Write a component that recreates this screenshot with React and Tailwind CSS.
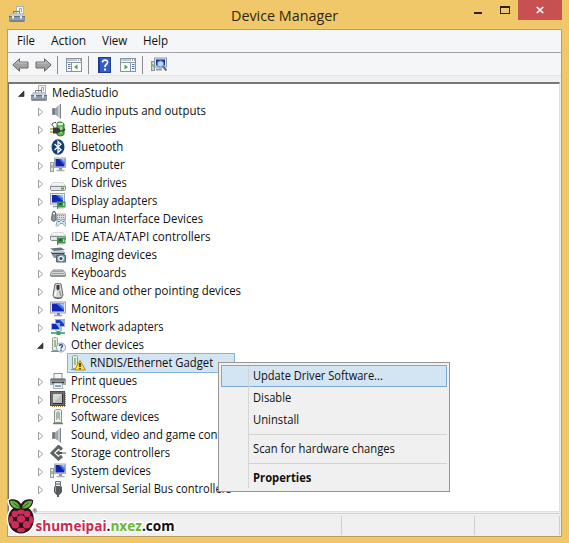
import React, { useLayoutEffect, useRef, useState } from "react";

/* Text condensed or widened to a fixed width. */
function Fit({ w, className = "", children }) {
  const ref = useRef(null);
  const [scale, setScale] = useState(1);
  useLayoutEffect(() => {
    setScale(w / ref.current.offsetWidth);
  }, []);
  return (
    <span className={"block shrink-0 whitespace-pre " + className} style={{ width: w + "px" }}>
      <span ref={ref} className="inline-block origin-left" style={{ transform: `scaleX(${scale})` }}>
        {children}
      </span>
    </span>
  );
}

function Svg({ children, className = "w-4 h-4" }) {
  return (
    <svg viewBox="0 0 16 16" className={"shrink-0 " + className} fill="none">
      {children}
    </svg>
  );
}

const Toolbox = () => (
  <Svg>
    <rect x="7.500" y="0.500" width="7" height="9" fill="#f3f4f0" stroke="#b0b4ae" />
    <path d="M10.500 6V2.500h2V6" stroke="#8cb97a" />
    <path d="M4.500 8V5.500h6V8" stroke="#6d757d" />
    <path d="M2 7.500h12l2 3V15H0v-4.500z" fill="#8794a1" />
    <path d="M2 7.500h12l1.500 2.500H.5z" fill="#c3ccd5" />
    <path d="M0 10.500h16" stroke="#65717d" />
    <path d="M.5 15.200h15" stroke="#5b646e" />
    <path d="M1 13h14" stroke="#9daab6" />
    <rect x="3" y="10" width="2" height="2.500" fill="#e6ebef" />
    <rect x="11" y="10" width="2" height="2.500" fill="#e6ebef" />
  </Svg>
);
const Speaker = () => (
  <Svg>
    <path d="M2.500 5.500H5v6H2.500z" fill="#6d7378" stroke="#8a9095" />
    <path d="M5 5.500 10.500 1v14.500L5 11.500z" fill="#9da5ab" />
    <path d="M8 3.500 10.500 1v14.500L8 13.500z" fill="#c2c8cd" />
    <path d="M10.500 1v14.500" stroke="#7b858e" />
  </Svg>
);
const Battery = () => (
  <Svg>
    <path d="M7 2.500c0-2 6-2 6 0l1 .5v10c0 2.500-7 2.500-7 0z" fill="#5cb855" stroke="#25702b" />
    <ellipse cx="10.300" cy="3" rx="3" ry="1.200" fill="#d8f0cf" />
    <path d="M11 6v6" stroke="#b8e8a8" strokeWidth="1.500" />
    <path d="M4 6C.5 4 2 1.500 6 1.500" stroke="#393d39" />
    <path d="M3 6.500h4.500L10 8v3l-2.500 1.500H3z" fill="#333932" />
    <path d="M0 8h3M0 11h3" stroke="#b09a48" strokeWidth="1.500" />
    <path d="M10 10c2 0 3 1 5-2" stroke="#33402e" strokeWidth="1.500" />
  </Svg>
);
const Bluetooth = () => (
  <Svg>
    <ellipse cx="8" cy="8" rx="6.500" ry="7.800" fill="#123f77" />
    <path d="M4.500 5 11 10.700 8 13.500v-11l3 2.800L4.500 11" stroke="#fff" strokeWidth="1.300" />
  </Svg>
);
const Computer = () => (
  <Svg>
    <rect x="4.500" y="1" width="11" height="9.500" fill="#e6e9ed" stroke="#a4acb6" />
    <rect x="5.500" y="2" width="9" height="7.500" fill="#1220b4" />
    <path d="M9 2h5.500v6z" fill="#4a76e8" />
    <path d="M11.500 2h3v3z" fill="#a7cafa" />
    <path d="M9 11h3v2H9z" fill="#8c949c" />
    <path d="M6.500 13.500h8" stroke="#a9b0b8" strokeWidth="1.500" />
    <rect x="0.500" y="5.500" width="3" height="9" fill="#dfe2e2" stroke="#9aa0a1" />
    <path d="M2 8v3" stroke="#4dae45" />
  </Svg>
);
const Monitor = () => (
  <Svg>
    <rect x="0.500" y="1" width="15" height="11" fill="#e6e9ed" stroke="#9aa4b0" />
    <rect x="2" y="2.500" width="12" height="8" fill="#1424b7" />
    <path d="M6 2.500h8v7z" fill="#4a7de8" />
    <path d="M9 2.500h5v4z" fill="#9dc4f8" />
    <path d="M7 12h3v2H7z" fill="#777f88" />
    <path d="M4 14.500h8" stroke="#9aa1a9" strokeWidth="1.500" />
  </Svg>
);
const Drive = () => (
  <>
    <path d="M3 6h10l3 3v3.500l-1 1H1l-1-1V9z" fill="#c4c7c8" />
    <path d="M3 5.500h10l2.500 3.500H.5z" fill="#f3f4f4" stroke="#c0c3c5" strokeWidth=".6" />
    <path d="M.5 9.500h15v3l-1 1h-13l-1-1z" fill="#e4e6e6" stroke="#8a8f92" />
  </>
);
const Disk = () => (
  <Svg className="w-4 h-4 translate-y-0.5">
    <Drive />
    <rect x="11" y="10.500" width="3" height="2" fill="#47a83d" />
  </Svg>
);
const Chip = () => (
  <>
    <rect x="8" y="8.500" width="7.500" height="6" fill="#3a9152" />
    <path d="M8.500 15.200h6" stroke="#b9a55a" strokeDasharray="1 1" />
    <rect x="9.500" y="10" width="2" height="2" fill="#164f29" />
    <rect x="13" y="10" width="1.500" height="3" fill="#a5dba8" />
    <path d="M7.500 8v8" stroke="#69756c" />
  </>
);
const Display = () => (
  <Svg>
    <rect x="0.500" y="0.500" width="14" height="10.500" fill="#e6e9ed" stroke="#9aa4b0" />
    <rect x="2" y="2" width="11" height="7.500" fill="#1424b7" />
    <path d="M6 2h7v6z" fill="#4a7de8" />
    <path d="M9 2h4v3z" fill="#9dc4f8" />
    <path d="M3 13.500h6" stroke="#9aa1a9" strokeWidth="1.500" />
    <Chip />
  </Svg>
);
const Hid = () => (
  <Svg>
    <path d="M6 3h9.500v6H6z" fill="#d9dde0" stroke="#929a9f" strokeWidth=".8" />
    <path d="M7 4.500h8M7 6.500h8" stroke="#838d96" strokeDasharray="1 1" />
    <path d="M2.500 1.500c0-1.500 3-1.500 3 0L6 8c0 3-4.500 3-4.500 0z" fill="#8c979d" stroke="#5b6468" />
    <path d="M3 2.500h2" stroke="#fff" strokeWidth="1.500" />
    <path d="M6 14.500 7.500 8.500h2l1 1h1l1-1h2L16 14.500c-1 1.500-2 0-3-2h-3c-1 2-3 3.500-4 2z" fill="#d9e8f3" stroke="#7192ab" strokeWidth=".8" />
    <path d="M8 10.500h2M12.500 10.500h1.500" stroke="#547fa7" />
  </Svg>
);
const Ide = () => (
  <Svg>
    <g transform="translate(0 -2)"><Drive /></g>
    <Chip />
  </Svg>
);
const Imaging = () => (
  <Svg>
    <path d="M0 1.500 11 .5 15 3 4 4z" fill="#66747f" />
    <path d="M1 5h13l1 2.500H2z" fill="#2e3c48" />
    <path d="M1 4.500 14 4l1.500 2H2z" fill="#b5c1c9" />
    <path d="M2 8h8v3H4z" fill="#8a979f" />
    <path d="M6.500 8.500H9l1-1.500h3l1 1.500h1.500v6.500h-9z" fill="#8797a4" stroke="#52636f" />
    <circle cx="11" cy="11.500" r="2.800" fill="#eef5fa" />
    <circle cx="11" cy="11.500" r="1.500" fill="#1e4d7d" />
  </Svg>
);
const Keyboard = () => (
  <Svg>
    <path d="M3 5h10l2.500 3.500V11h-15V8.500z" fill="#d3d6d7" stroke="#868b8e" />
    <path d="M3.500 6.500h9M2.500 8.500h11" stroke="#656b70" strokeDasharray="1 1" />
    <path d="M1 11h14" stroke="#6c7174" />
  </Svg>
);
const Mouse = () => (
  <Svg>
    <path d="M5 1C6 0 10 0 11 1l2 11c0 4-10 4-10 0z" fill="#d7d8d7" stroke="#656866" />
    <path d="M6.500 2h3v4l-1.500 1.500L6.500 6z" fill="#353938" />
    <path d="M6 8 5 13" stroke="#fff" strokeWidth="1.500" />
    <path d="M9.500 8 11 13" stroke="#969a99" strokeWidth="1.500" />
    <path d="M3.500 14c2 2 7 2 9 0" stroke="#4d514f" />
  </Svg>
);
const Network = () => (
  <Svg>
    <rect x="5.500" y="0.500" width="9" height="7" fill="#1f39c5" stroke="#a5afbb" />
    <path d="M10 1h4v4z" fill="#82b0f5" />
    <rect x="1.500" y="4.500" width="8" height="6" fill="#1529b8" stroke="#b0b9c3" />
    <path d="M6 5h3v4z" fill="#82b0f5" />
    <path d="M11 8v4M5 11h2" stroke="#98a0a8" strokeWidth="1.500" />
    <path d="M1 14h14" stroke="#55b886" strokeWidth="2" />
    <path d="M6.500 12h4v4h-4z" fill="#3d9f6d" />
  </Svg>
);
const Case = () => (
  <>
    <path d="M2.500 13.500v-12c0-1.300 5-1.300 5 0v12z" fill="#e9ebe6" stroke="#979c95" />
    <path d="M5 3v7" stroke="#70b864" strokeWidth="1.500" />
    <path d="M1 14.500h8" stroke="#868d85" />
  </>
);
const Other = () => (
  <Svg>
    <Case />
    <circle cx="11" cy="10.500" r="4.500" fill="#f2f6fb" stroke="#8497ba" />
    <path d="M9.500 9c0-2 3.300-1.700 3 0-.2 1-1.500 1-1.500 2.500" stroke="#234da4" strokeWidth="1.400" />
    <rect x="10.300" y="12.500" width="1.500" height="1.400" fill="#234da4" />
  </Svg>
);
const Warning = () => (
  <Svg>
    <Case />
    <path d="m10 5.500 5.500 9.500h-11z" fill="#ffdc35" stroke="#b48a12" strokeLinejoin="round" />
    <path d="M10 8v4M10 13v1.300" stroke="#272410" strokeWidth="1.500" />
  </Svg>
);
const Printer = () => (
  <Svg>
    <rect x="4" y="0.500" width="8" height="6" fill="#f3f6f8" stroke="#8a9298" />
    <path d="M1 5.500h14l1 2V12H0V7.500z" fill="#a3a9ad" />
    <path d="M1 5.500h14l1 2H0z" fill="#6d757b" />
    <path d="M2 9.500h12" stroke="#353b40" strokeWidth="1.500" />
    <path d="M4 10h8l1 5.500H3z" fill="#eef4f8" stroke="#899299" strokeWidth=".7" />
    <path d="M5 13h6" stroke="#4c93c4" strokeWidth="1.500" />
  </Svg>
);
const Processor = () => (
  <Svg>
    <path d="M2 15.500h14M15.500 2v13" stroke="#a88446" strokeDasharray="1 1" />
    <rect x="0.500" y="0.500" width="14" height="14" fill="#6a6d6f" stroke="#4b4d4e" />
    <rect x="3" y="3" width="9" height="9" fill="#bcbebe" />
    <path d="M3 3h9l-9 9z" fill="#d6d8d8" />
    <path d="M3 12.500h9.500V3" stroke="#2c2e2f" />
  </Svg>
);
const Software = () => (
  <Svg>
    <path d="M4.500 13.500v-12c0-1.300 7-1.300 7 0v12z" fill="#eef0ed" stroke="#8c918b" />
    <path d="M6.500 11V3.500c0-1 3-1 3 0V11" stroke="#a8aea6" />
    <path d="M8 3.500v6" stroke="#67b557" strokeWidth="1.300" />
    <path d="M3 14.500h10" stroke="#757c75" strokeWidth="1.500" />
  </Svg>
);
const Storage = () => (
  <Svg>
    <path d="m12 4.500-3.500-3L2 8l6.500 6 3.500-3" stroke="#5f6363" strokeWidth="3" />
    <path d="M8 8h5" stroke="#4a4d4d" strokeWidth="2" />
    <path d="m9.500 5-4 3 4 3z" fill="#5b5f5f" />
    <path d="M12 7h4v2h-4z" fill="#a9adad" />
  </Svg>
);
const Usb = () => (
  <Svg>
    <path d="M5.500.5h5v5h-5z" fill="#e3e5e6" stroke="#6e7376" />
    <path d="M7 2v2M9 2v2" stroke="#5a5f61" />
    <path d="M4 5.500h8V11l-2.500 3h-3L4 11z" fill="#555b5f" />
    <path d="M5.500 6v5" stroke="#9ba1a4" />
    <path d="M8 13v3" stroke="#5c6265" strokeWidth="2" />
  </Svg>
);

const rows = [
  ["Audio inputs and outputs", 135, Speaker],
  ["Batteries", 45, Battery],
  ["Bluetooth", 52, Bluetooth],
  ["Computer", 54, Computer],
  ["Disk drives", 56, Disk],
  ["Display adapters", 86, Display],
  ["Human Interface Devices", 132, Hid],
  ["IDE ATA/ATAPI controllers", 140, Ide],
  ["Imaging devices", 86, Imaging],
  ["Keyboards", 55, Keyboard],
  ["Mice and other pointing devices", 170, Mouse],
  ["Monitors", 48, Monitor],
  ["Network adapters", 93, Network],
  ["Other devices", 73, Other, "open"],
  ["RNDIS/Ethernet Gadget", 123, Warning, "selected"],
  ["Print queues", 66, Printer],
  ["Processors", 56, Processor],
  ["Software devices", 88, Software],
  ["Sound, video and game controllers", 184, Speaker],
  ["Storage controllers", 99, Storage],
  ["System devices", 80, Computer],
  ["Universal Serial Bus controllers", 160, Usb],
];

const Expander = ({ open }) => (
  <svg viewBox="0 0 8 10" className="w-2 h-2.5 shrink-0 translate-y-px">
    {open ? (
      <path d="M6 2v5.500H.5z" fill="#3b3b3b" stroke="#222" strokeWidth=".6" />
    ) : (
      <path d="M1.500 1.200v7.600L5.700 5z" fill="#fff" stroke="#9d9d9d" />
    )}
  </svg>
);

function Row({ item }) {
  const [label, w, Icon, state] = item;
  if (state === "selected")
    return (
      <div className="flex h-[18px] pl-[58px]">
        <div className="flex h-5 w-[168px] -mt-px items-center border border-[#86b3da] bg-[#d3e4f3] pl-0.5">
          <Icon />
          <Fit w={w} className="ml-1">{label}</Fit>
        </div>
      </div>
    );
  return (
    <div className="flex h-[18px] items-center pl-[28px]">
      <Expander open={state === "open"} />
      <span className="ml-[5px] flex"><Icon /></span>
      <Fit w={w} className="ml-[5px]">{label}</Fit>
    </div>
  );
}

const Arrow = ({ flip }) => (
  <svg viewBox="0 0 17 14" className={"w-[17px] h-3.5 " + (flip ? "-scale-x-100" : "")}>
    <path d="M.8 7 7.500.8V4H16v6H7.500v3.200z" fill="#a3a3a3" stroke="#686868" strokeLinejoin="round" />
    <path d="M3 6.500 6.500 3v2H15" fill="none" stroke="#c9c9c9" />
  </svg>
);

const PanelIcon = ({ right }) => (
  <svg viewBox="0 0 16 14" className="w-4 h-3.5" fill="none">
    <rect x=".5" y=".5" width="15" height="13" fill="#fafbfc" stroke="#8b939c" />
    <path d="M1 2h10M1 4.500h14" stroke="#8b98a8" />
    <path d="M12 2h1M14 2h1" stroke="#4f5c6c" />
    <path d={right ? "M10.500 5v8" : "M5.500 5v8"} stroke="#8b98a8" />
    <path d={right ? "M12 6.500h2.500M12 8.500h2.500M12 10.500h2.500" : "M2 6.500h2.500M2 8.500h2.500M2 10.500h2.500"} stroke="#5574a5" />
    <path d={right ? "M4.500 6.500v5L8 9z" : "M11.500 6.500v5L8 9z"} fill="#46a935" />
  </svg>
);

const Separator = () => <div className="h-[18px] w-px bg-[#8d8d8d]" />;

function MenuItem({ label, w, active, bold }) {
  return (
    <div
      className={
        "flex h-[22px] items-center border pl-[31px] " +
        (active ? "border-[#7eaad2] bg-[#d3e4f3]" : "border-transparent") +
        (bold ? " font-bold" : "")
      }
    >
      <Fit w={w}>{label}</Fit>
    </div>
  );
}

const berries = [
  [14, 14, 3.800, 2.600], [7.800, 16, 3.200, 3.200], [20.200, 16, 3.200, 3.200], [14, 21, 4.100, 3.700],
  [4, 21.800, 2, 3.900], [24, 21.800, 2, 3.900], [8.200, 26.800, 3.900, 3.800],
  [19.800, 26.800, 3.900, 3.800], [14, 32, 4, 2.300],
];

function Watermark() {
  return (
    <svg viewBox="0 0 176 38" className="absolute left-[7px] top-[498px] h-[38px] w-44 overflow-visible">
      <path
        d="M14 6C11 .5 4 .5 1.800 2.300c0 4 2 6.500 4.500 8C2.500 13 1.200 17 1.200 21c0 8 5 14.500 12.800 14.500S26.800 29 26.800 21c0-4-1.300-8-5.100-10.700 2.500-1.500 4.500-4 4.500-8C24 .5 17 .5 14 6z"
        fill="#2a1418" stroke="#fff" strokeWidth="3" paintOrder="stroke" strokeLinejoin="round"
      />
      <path d="M13.200 10.500C12 4 7 2 2.800 3c.7 5.500 5 8 10.400 7.500zM14.800 10.500C16 4 21 2 25.200 3c-.7 5.500-5 8-10.400 7.500z" fill="#62b23b" />
      <path d="M13 10 6.500 5M15 10l6.500-5" stroke="#1f4913" strokeWidth=".8" />
      {berries.map(([x, y, rx, ry], i) => (
        <ellipse key={i} cx={x} cy={y} rx={rx} ry={ry} fill="#cf2d57" />
      ))}
      <g stroke="#fff" strokeWidth="3" strokeLinejoin="round" paintOrder="stroke" className="font-['Open_Sans',sans-serif] font-bold">
        <text x="25.500" y="14.500" fontSize="5.500" fill="#333" strokeWidth="1">®</text>
        <text x="28.500" y="32.500" fontSize="14.800" textLength="139" lengthAdjust="spacingAndGlyphs">
          <tspan fill="#cd2850">shumeipai</tspan>
          <tspan fill="#111">.</tspan>
          <tspan fill="#68b82f">nxez</tspan>
          <tspan fill="#111">.com</tspan>
        </text>
      </g>
    </svg>
  );
}

export default function App() {
  return (
    <div className="relative flex h-[543px] w-[569px] flex-col overflow-hidden bg-[#f0c869] px-[7px] pb-1.5 font-['Open_Sans','Noto_Sans',sans-serif] text-[12px] leading-[18px] text-[#101010]">
      <header className="flex h-[29px] shrink-0 items-start">
        <div className="mt-1.5 ml-0.5 w-[222px] shrink-0"><Toolbox /></div>
        <Fit w={107} className="mt-[5px] text-[15px] leading-5 text-[#2d2813]">Device Manager</Fit>
        <div className="mt-3 ml-[136px] h-0.5 w-2 bg-[#28220f]" />
        <div className="mt-1.5 ml-[18px] h-2 w-2.5 border border-t-2 border-[#28220f]" />
        <div className="ml-2 flex h-5 w-[45px] items-center justify-center bg-[#c75050]">
          <svg viewBox="0 0 8 8" className="h-2 w-2"><path d="m.8 1 6.400 6M7.200 1 .8 7" stroke="#fff" strokeWidth="1.700" /></svg>
        </div>
      </header>

      <main className="flex min-h-0 flex-1 flex-col border border-[#bd9f5c] bg-[#f0f0f0]">
        <nav className="flex h-[23px] shrink-0 items-center border-b border-[#a7a7ad] bg-[#f5f6f7] pl-[9px]">
          <Fit w={18}>File</Fit>
          <Fit w={35} className="ml-4">Action</Fit>
          <Fit w={25} className="ml-4">View</Fit>
          <Fit w={25} className="ml-4">Help</Fit>
        </nav>
        <div className="flex h-[23px] shrink-0 items-center border-b border-[#e4e4e4] bg-[#f5f6f7] pl-1 pt-0.5">
          <Arrow />
          <span className="ml-1.5 mr-[5px]"><Arrow flip /></span>
          <Separator />
          <span className="ml-2 mr-1.5"><PanelIcon /></span>
          <Separator />
          <svg viewBox="0 0 13 16" className="ml-[9px] h-4 w-[13px]">
            <rect x=".5" y=".5" width="12" height="15" fill="#355dc8" stroke="#213d92" />
            <path d="M1.500 1v14" stroke="#203c97" />
            <path d="M4.500 5.500c0-3.500 5.500-3 5 0-.3 2-2.500 2-2.500 4.500" fill="none" stroke="#fff" strokeWidth="1.700" />
            <rect x="6" y="11.500" width="2" height="2" fill="#fff" />
          </svg>
          <span className="ml-[9px] mr-1.5"><PanelIcon right /></span>
          <Separator />
          <Svg className="ml-2 h-4 w-4">
            <rect x="3.500" y="1" width="12" height="9" fill="#dfe4ec" stroke="#8e9aab" />
            <rect x="5" y="2.500" width="9" height="6" fill="#1a2dad" />
            <rect x=".5" y="4.500" width="3" height="9" fill="#ced3d2" stroke="#8b9491" />
            <path d="M2 7v3" stroke="#4dac4a" />
            <path d="M5 12.500h6" stroke="#8e99a5" strokeWidth="2" />
            <circle cx="9.500" cy="7" r="3.200" fill="#b8ddf3" stroke="#5683b4" />
            <path d="m12 9.500 3.500 4" stroke="#65717f" strokeWidth="2" />
          </Svg>
        </div>
        <div className="mt-1.5 flex h-[430px] shrink-0 flex-col border-t-2 border-r border-b border-l border-t-[#777] border-r-[#dfdfdf] border-b-[#dfdfdf] border-l-[#777] bg-white mr-px">
          <div className="flex h-[18px] shrink-0 items-center pl-[9px]">
            <Expander open />
            <span className="ml-[5px] flex"><Toolbox /></span>
            <Fit w={66} className="ml-[5px]">MediaStudio</Fit>
          </div>
          {rows.map((r) => <Row key={r[0]} item={r} />)}
        </div>
        <footer className="mt-px flex flex-1 border-t border-[#d3d3d3] pt-0.5 pb-px">
          <div className="w-[334px] border-r border-[#cfcfcf]" />
          <div className="w-[133px] border-r border-[#cfcfcf]" />
          <div className="w-[85px] border-r border-[#cfcfcf]" />
        </footer>
      </main>

      <div className="absolute left-[218px] top-[362px] h-[130px] w-[232px] border border-[#979797] bg-[#f0f0f0] p-0.5">
        <div className="absolute top-[3px] left-[29px] h-[122px] w-px bg-[#d5d5d5]" />
        <MenuItem active label="Update Driver Software..." w={130} />
        <MenuItem label="Disable" w={38} />
        <MenuItem label="Uninstall" w={46} />
        <div className="mt-[3px] mb-[3px] ml-7 h-px bg-[#d2d2d2]" />
        <MenuItem label="Scan for hardware changes" w={142} />
        <div className="mt-[3px] mb-[3px] ml-7 h-px bg-[#d2d2d2]" />
        <MenuItem bold label="Properties" w={58} />
      </div>

      <Watermark />
    </div>
  );
}
